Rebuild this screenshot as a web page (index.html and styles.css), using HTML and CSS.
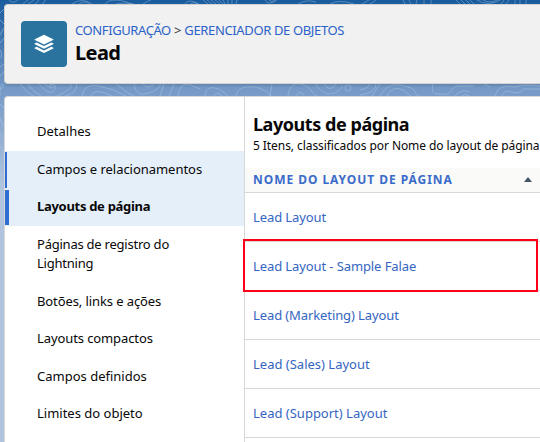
FILE: index.html
```
<!DOCTYPE html>
<html lang="pt-BR">
<head>
<meta charset="utf-8">
<title>Lead</title>
<link rel="stylesheet" href="styles.css">
</head>
<body>
<svg class="contours" viewBox="0 0 540 200" aria-hidden="true">
  <g fill="none" stroke="#a9c5e3" stroke-width="1">
    <g opacity=".42">
      <path d="M9 0q4 5 10-1M28 0l-5 4M34 0l-6 4M39 0q-1 2-4 4M45 0q0 2-3 4M72 4q10-7 20 0M79 4q6-4 10 0M105 4q5-6 18-3l9 3M116 4q10-2 18 0M151 0q-6 2-8 4M185 4q3-6 14 0M190 4q4-3 8 0M203 0l5 4M207 0l5 4M211 0l5 4M215 0l5 4M219 0l4 4M223 0l2 4M228 0v4M232 0v4M237 0l-1 4M265 0q3 6 12 0M269 0q3 3 6 0M298 4q8-5 18-2M330 4q9-5 24 0M362 4l7-4M370 4l6-4M403 0l2 4M409 0l2 4M416 4l1-4M424 4V0M431 4V0M456 0l4 4M461 0l4 4M466 0l4 4M470 0l4 4M477 0q11 7 23 0M483 0q7 4 14 0M504 0l-3 4M509 0l-3 4M515 0v4M520 0v4M526 0v4"/>
    </g>
    <g opacity=".55">
      <path d="M4 84q-5 0-4 12M20 84q6 8 13 12M28 84q4 7 13 12M39 84c5 6 12 13 17 4q0-3-3-4M45 84q4 6 7 0M57 96q16-7 14-12M65 96q12-3 12-12M82 96q2-13 17-10t27 10M91 96q3-7 14-3l7 3M116 84l12 9 6 3M134 84q2 14 15 9t11-9M143 84q4 6 11 0M160 96l4-12M169 96l5-12M178 96q1-12 10-12M188 84l12 5M205 96c1-13 14-9 23 0M214 96q3-6 8 0M236 96c2-11 17-10 23-8q9 3 12 8M272 84l-2 12M288 96c1-12 9-14 16-11s8 8 13 11M297 96q1-7 7-1M316 84c5 10 17 15 27 2M324 84q6 9 12 0M360 90q9-2 10-6M360 95q16-2 16-11M372 96l8-12M380 96c8-14 18-12 28-9s4 5 11 9M387 96q5-11 16-6l8 6M433 84q-3 10 5 10c16 2 10-5 19-8h17M455 96q7-8 15-4M462 96q4-3 7 0M484 84l6 3M495 96q3-13 20-9 8-3 25-1M502 96q2-7 10-4t11-3h17"/>
      <circle cx="348" cy="88" r="3"/><circle cx="52" cy="86" r="2"/>
      <path d="M0 13l4-4M0 20l4 4M0 35l4-7M0 43l4-5M0 50q3 3 1 8M0 67l4-3M0 76q3-1 4-5M0 90l4-4M0 104l4 4M0 118q2 7 4 9M0 132l4 8M0 146q4 4 4 14M0 163l4 9"/>
    </g>
  </g>
</svg>
<header class="page-header">
  <div class="object-icon">
    <svg width="20" height="20" viewBox="0 0 20 20" fill="#fff" aria-hidden="true">
      <path d="M10 .7 19.2 5.2Q19.8 5.6 19.2 6L10 10.4.8 6Q.2 5.6.8 5.2Z"/>
      <path d="M.6 9.4 2.6 8.5 10 12 17.4 8.5 19.4 9.4Q19.9 9.8 19.3 10.2L10 14.7.7 10.2Q.1 9.8.6 9.4Z"/>
      <path d="M.6 13.7 2.6 12.8 10 16.4 17.4 12.8 19.4 13.7Q19.9 14.1 19.3 14.5L10 19.1.7 14.5Q.1 14.1.6 13.7Z"/>
    </svg>
  </div>
  <div class="heading">
    <nav class="breadcrumb"><a class="crumb-setup">CONFIGURAÇÃO</a><span class="crumb-sep">&gt;</span><a class="crumb-manager">GERENCIADOR DE OBJETOS</a></nav>
    <h1><span>Lead</span></h1>
  </div>
</header>
<main class="panel">
  <nav class="sidebar">
    <a class="item"><span>Detalhes</span></a>
    <a class="item hovered"><span>Campos e relacionamentos</span></a>
    <a class="item selected"><span>Layouts de página</span></a>
    <a class="item double"><span>Páginas de registro do<br>Lightning</span></a>
    <a class="item tight"><span>Botões, links e ações</span></a>
    <a class="item tight"><span>Layouts compactos</span></a>
    <a class="item"><span>Campos definidos</span></a>
    <a class="item"><span>Limites do objeto</span></a>
  </nav>
  <section class="content">
    <h2><span>Layouts de página</span></h2>
    <p class="summary"><span>5 Itens, classificados por Nome do layout de página</span></p>
    <div class="column-head"><span>NOME DO LAYOUT DE PÁGINA</span><i class="sort"></i></div>
    <a class="row tight"><span>Lead Layout</span></a>
    <a class="row tight highlighted"><span>Lead Layout - Sample Falae</span></a>
    <a class="row tight"><span>Lead (Marketing) Layout</span></a>
    <a class="row"><span>Lead (Sales) Layout</span></a>
    <a class="row"><span>Lead (Support) Layout</span></a>
  </section>
</main>
</body>
</html>
```
FILE: styles.css
```
*, *::before, *::after { box-sizing: border-box; }
html, body { height: 100%; overflow: hidden; }
body {
  margin: 0;
  padding: 4px 0 0 4px;
  display: flex;
  flex-direction: column;
  gap: 12px;
  font: 13px/19px "Noto Sans", sans-serif;
  color: #080707;
  background: linear-gradient(#195c9e 0, #2b68a8 20px, #7499c7 88px, #b0c4df 185px);
}
.contours { position: absolute; left: 0; top: 0; width: 540px; height: 200px; }
h1, h2, p { margin: 0; }
.page-header {
  position: relative;
  height: 80px;
  flex: none;
  display: flex;
  padding: 16px 0 0 16px;
  gap: 8px;
  background: #f1f1f1;
  border: 1px solid #d3d2d0;
  border-right: 0;
  border-radius: 4px 0 0 4px;
  box-shadow: 0 2px 2px rgba(0, 0, 0, .1);
}
.object-icon {
  width: 46px;
  height: 46px;
  display: grid;
  place-items: center;
  background: #2a739e;
  border-radius: 4px;
}
.breadcrumb { display: flex; height: 20px; line-height: 19px; white-space: nowrap; color: #2b62c8; }
.crumb-setup { letter-spacing: -.4px; }
.crumb-manager { letter-spacing: -.36px; }
.crumb-sep { width: 13.5px; text-align: center; color: #333; }
h1 { font-size: 20px; line-height: 24px; font-weight: 700; letter-spacing: -.6px; }
.panel {
  position: relative;
  flex: 1;
  display: flex;
  background: #fff;
  border: 1px solid #d8d7d6;
  border-width: 1px 0 0 1px;
  border-radius: 4px 0 0 0;
}
.sidebar { width: 239px; padding-top: 16px; }
.item { display: flex; align-items: center; height: 37.5px; padding-left: 32px; white-space: nowrap; }
.double { height: 57px; letter-spacing: -.23px; }
.tight { letter-spacing: -.1px; }
.hovered, .selected { background: #e5eff9; }
.hovered { height: 38px; letter-spacing: -.04px; border: solid #e5eff9; border-width: 1px 0; box-shadow: inset 2px 0 #2f6dd5; }
.selected { height: 37px; font-weight: 700; letter-spacing: -.3px; padding-bottom: 1px; border: solid #e5eff9; border-width: 1px 0; box-shadow: inset 4px 0 #2f6dd5; }
.content { flex: 1; border-left: 1px solid #d8d7d6; padding-top: 15px; min-width: 0; }
h2 { padding-left: 8px; font-size: 18px; line-height: 24px; letter-spacing: -.45px; }
.summary { padding-left: 8px; height: 32px; font-size: 12px; line-height: 19px; white-space: nowrap; letter-spacing: -.07px; }
.column-head {
  height: 25px;
  display: flex;
  align-items: center;
  justify-content: space-between;
  padding: 0 8px;
  font-size: 12px;
  font-weight: 700;
  letter-spacing: .95px;
  color: #3a6bc9;
  background: #fafaf9;
  border-bottom: 1px solid #d8d7d6;
}
.column-head span { padding-bottom: 1px; }
.sort { border: solid transparent; border-width: 0 4px 5px; border-bottom-color: #44546a; margin-bottom: 2px; }
.row { position: relative; display: flex; align-items: center; height: 49px; padding-left: 8px; border-bottom: 1px solid #d8d7d6; color: #3565c2; }
.highlighted::after { content: ""; position: absolute; left: -2px; top: -3px; width: 295px; height: 53px; border: 2px solid #ff0018; }
```
